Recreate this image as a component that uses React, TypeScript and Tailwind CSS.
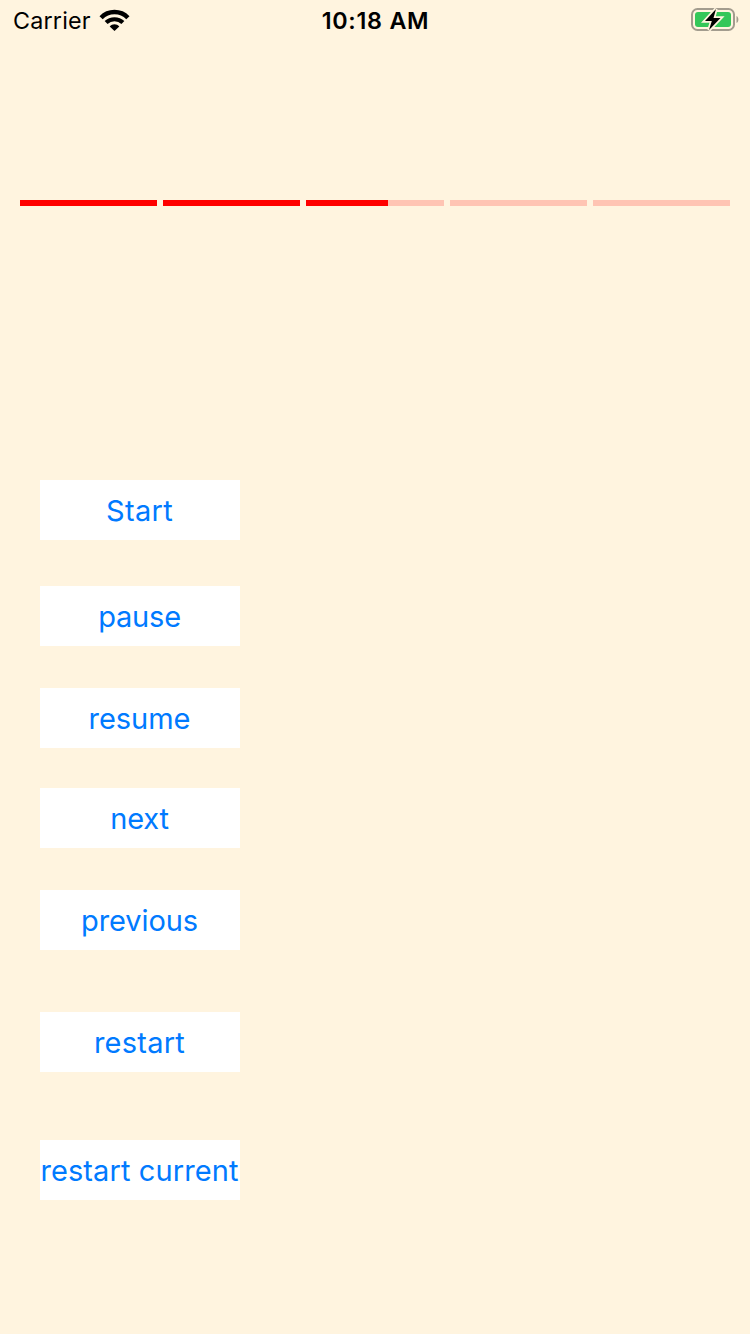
const segments = [100, 100, 59.6, 0, 0];

const buttons = [
  { label: "Start", style: "tracking-[0.3px]" },
  { label: "pause", style: "mt-[46px] tracking-[-0.2px]" },
  { label: "resume", style: "mt-[42px] tracking-[-0.05px]" },
  { label: "next", style: "mt-10 tracking-[-0.25px]" },
  { label: "previous", style: "mt-[42px] tracking-[-0.1px]" },
  { label: "restart", style: "mt-[62px] tracking-[0.25px]" },
  { label: "restart current", style: "mt-[68px] tracking-[0.1px]" },
];

export default function App() {
  return (
    <main className="h-[1334px] w-[750px] overflow-hidden bg-[#fff4df] font-['Inter',sans-serif]">
      <header className="grid h-10 grid-cols-3 items-center pl-[13px] pr-[11px] text-black">
        <div className="flex items-center gap-[9px] text-[23.3px] leading-[38px]">
          <span className="w-[77px] pt-0.5 tracking-[0.2px]">Carrier</span>
          <svg width="31" height="24" viewBox="0 0 31 24" fill="none" stroke="black">
            <path d="M2.1 9.7C9.4 2.2 21.6 2.2 28.9 9.7" strokeWidth="4.5" />
            <path d="M7.1 14.6C11.7 10.1 19.3 10.1 23.9 14.6" strokeWidth="4.2" />
            <path d="M15.5 23L10.7 18.4C13.4 15.6 17.6 15.6 20.3 18.4Z" fill="black" stroke="none" />
          </svg>
        </div>
        <div className="pr-px pt-0.5 text-center text-[23.3px] font-semibold leading-[38px] tracking-[0.75px]">10:18 AM</div>
        <svg className="justify-self-end" width="48" height="24" viewBox="0 0 48 24">
          <rect x="1" y="1" width="42" height="21" rx="5.5" fill="none" stroke="#a39c8e" strokeWidth="2" />
          <rect x="4" y="4" width="36" height="15" rx="3" fill="#34c759" />
          <path d="M45.5 8v7c2.5-1 2.5-6 0-7Z" fill="#a39c8e" />
          <path d="M25 1L14 13h6.8L18 22 29.5 10h-7Z" fill="black" stroke="#fff4df" strokeWidth="3.5" paintOrder="stroke" />
        </svg>
      </header>
      <div className="mx-5 mt-40 grid h-1.5 grid-cols-5 gap-1.5">
        {segments.map((value, index) => (
          <div key={index} className="bg-[#ffc4b3]">
            <div className="h-full bg-[#ff0000]" style={{ width: `${value}%` }} />
          </div>
        ))}
      </div>
      <div className="ml-10 mt-[274px] flex w-[200px] flex-col text-[29px] text-[#007aff]">
        {buttons.map(({ label, style }) => (
          <button key={label} className={`h-[60px] whitespace-nowrap bg-white pr-px pt-0.5 ${style}`}>
            {label}
          </button>
        ))}
      </div>
    </main>
  );
}
